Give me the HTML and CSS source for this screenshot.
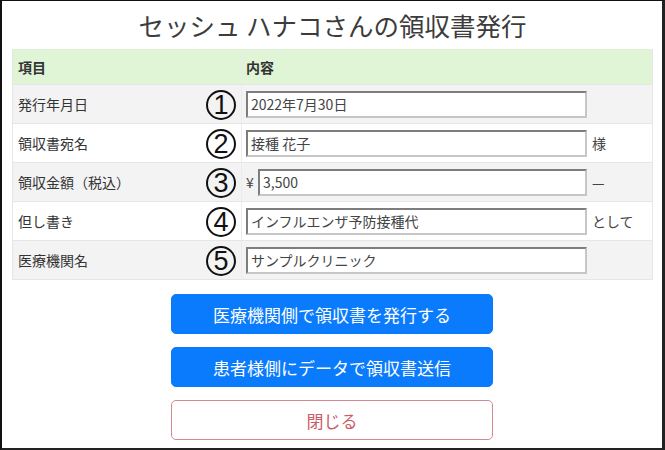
FILE: index.html
```html
<!DOCTYPE html>
<html lang="ja">
<head>
<meta charset="utf-8">
<link rel="stylesheet" href="styles.css">
</head>
<body>
<div class="frame">
  <h1 class="title">セッシュ ハナコさんの領収書発行</h1>
  <div class="table">
    <div class="row head">
      <div class="cell label">項目</div>
      <div class="cell value">内容</div>
    </div>
    <div class="row odd">
      <div class="cell label"><span>発行年月日</span><span class="num">1</span></div>
      <div class="cell value"><span class="field">2022年7月30日</span></div>
    </div>
    <div class="row">
      <div class="cell label"><span>領収書宛名</span><span class="num">2</span></div>
      <div class="cell value"><span class="field">接種 花子</span><span class="suffix">様</span></div>
    </div>
    <div class="row odd">
      <div class="cell label"><span>領収金額（税込）</span><span class="num">3</span></div>
      <div class="cell value"><span class="yen">¥</span><span class="field short">3,500</span><span class="suffix">—</span></div>
    </div>
    <div class="row">
      <div class="cell label"><span>但し書き</span><span class="num">4</span></div>
      <div class="cell value"><span class="field">インフルエンザ予防接種代</span><span class="suffix">として</span></div>
    </div>
    <div class="row odd">
      <div class="cell label"><span>医療機関名</span><span class="num">5</span></div>
      <div class="cell value"><span class="field">サンプルクリニック</span></div>
    </div>
  </div>
  <div class="actions">
    <button class="btn primary">医療機関側で領収書を発行する</button>
    <button class="btn primary">患者様側にデータで領収書送信</button>
    <button class="btn outline">閉じる</button>
  </div>
</div>
</body>
</html>
```
FILE: styles.css
```css
* { box-sizing: border-box; }
html, body { margin: 0; padding: 0; background: #fff; }
body {
  font-family: "Noto Sans CJK JP", "Noto Sans", sans-serif;
  color: #333;
}
.frame {
  width: 665px;
  height: 450px;
  border-left: 2px solid #111;
  border-top: 1px solid #111;
  border-right: 3px solid #222;
  border-bottom: 2px solid #222;
  padding: 4px 9px 0 10px;
}
.title {
  margin: 0 0 4px;
  font-size: 25.5px;
  font-weight: 400;
  line-height: 40px;
  text-align: center;
  color: #3c3c3c;
}
.table {
  border: 1px solid #e6e6e6;
  border-top: none;
}
.row {
  display: grid;
  grid-template-columns: 228px 1fr;
  height: 39px;
  border-top: 1px solid #e6e6e6;
  background: #fff;
}
.row.odd { background: #f3f3f3; }
.row.head {
  height: 35px;
  background: #dff5d6;
  border-top: 1px solid #e3f0de;
  font-weight: 700;
}
.row.head .cell { font-size: 14px; }
.cell {
  display: flex;
  align-items: center;
  font-size: 14px;
}
.label {
  justify-content: space-between;
  padding: 0 5px 0 5px;
}
.value {
  border-left: 1px solid #ececec;
  padding-left: 4px;
}
.num {
  width: 30px;
  height: 30px;
  border: 2px solid #111;
  border-radius: 50%;
  display: flex;
  align-items: center;
  justify-content: center;
  font-family: "Liberation Sans", Arial, sans-serif;
  font-size: 27px;
  line-height: 1;
  color: #111;
  margin-top: 2px;
}
.field {
  display: flex;
  align-items: center;
  width: 341px;
  height: 27px;
  background: #fff;
  border: 2px solid;
  border-color: #7d7d7d #c6c6c6 #c6c6c6 #7d7d7d;
  padding-left: 3px;
  font-size: 14px;
  color: #444;
}
.field.short { width: 329px; }
.yen {
  width: 12px;
  font-size: 14px;
  color: #444;
}
.suffix {
  margin-left: 5px;
  font-size: 14px;
  color: #444;
}
.actions {
  display: flex;
  flex-direction: column;
  align-items: center;
  gap: 13px;
  margin-top: 14px;
  padding-right: 1px;
}
.btn {
  width: 322px;
  height: 40px;
  border-radius: 5px;
  font-family: "Noto Sans CJK JP", "Noto Sans", sans-serif;
  font-size: 17px;
  padding: 0;
  cursor: pointer;
}
.btn.primary {
  background: #0b7bfd;
  border: 1px solid #0b7bfd;
  color: #fff;
}
.btn.outline {
  background: #fff;
  border: 1px solid #d98690;
  color: #cb5d69;
}
```
